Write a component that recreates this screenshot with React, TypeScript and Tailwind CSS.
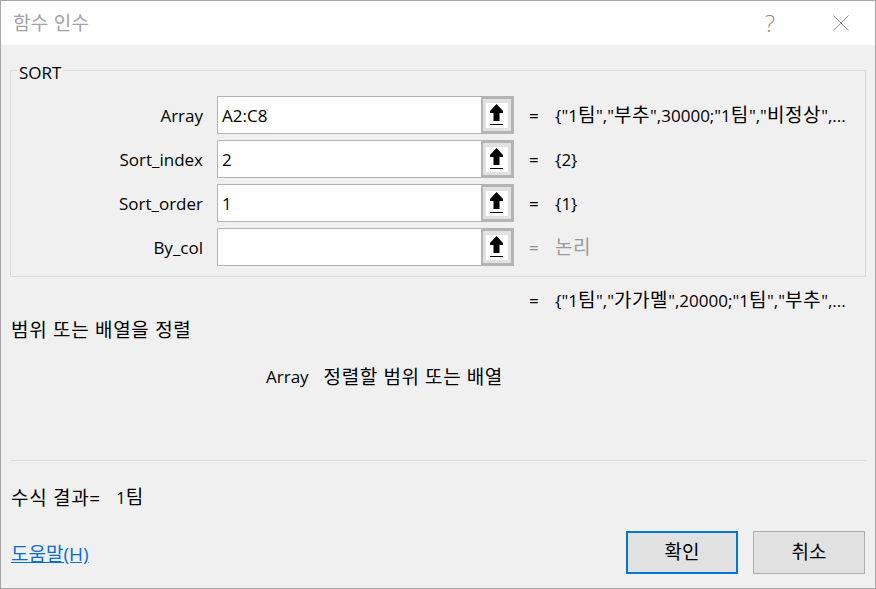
import React from 'react';

const FONT = "font-['Open_Sans','Noto_Sans_CJK_KR',sans-serif]";

const rows = [
  { label: 'Array', value: 'A2:C8', result: '{"1팀","부추",30000;"1팀","비정상",...', muted: false },
  { label: 'Sort_index', value: '2', result: '{2}', muted: false },
  { label: 'Sort_order', value: '1', result: '{1}', muted: false },
  { label: 'By_col', value: '', result: '논리', muted: true },
];

// hangul runs are set a bit bigger, Malgun Gothic is wider than Noto
const Ko = ({ text }: { text: string }) => (
  <>
    {text.split(/([가-힣]+(?: [가-힣]+)*)/).map((part, i) =>
      /[가-힣]/.test(part) ? (
        <span key={i} className="text-[19px] leading-[24px] tracking-[0.6px]">{part}</span>
      ) : (
        <span key={i}>{part}</span>
      ),
    )}
  </>
);

const RefIcon = () => (
  <svg width="22" height="25" viewBox="0 0 22 25" aria-hidden="true">
    <rect width="22" height="25" fill="#ffffff" />
    <path d="M10.5 1 L17 8 V10 H13.5 V18 H7.5 V10 H4 V8 Z" fill="#000000" />
    <rect x="4" y="21" width="13" height="1" fill="#000000" />
  </svg>
);

const ArgRow = ({ label, value, result, muted }: (typeof rows)[number]) => (
  <div className="flex h-[38px] items-center">
    <div className="w-[206px] pr-[14px] pt-[2px] text-right">{label}</div>
    <div className="flex h-[38px] w-[297px] border border-[#b4b4b4] bg-white">
      <div className="flex-1 pl-[4px] leading-[37px]">{value}</div>
      <div className="flex w-[32px] items-center justify-center border-2 border-[#b4b4b4] bg-[#e1e1e1]">
        <RefIcon />
      </div>
    </div>
    <div className={`ml-[15px] w-[26px] pt-[2px] ${muted ? 'text-[#8f8f8f]' : 'text-black'}`}>=</div>
    <div className={`pt-[2px] ${muted ? 'text-[#9a9a9a]' : 'text-black'}`}>
      <Ko text={result} />
    </div>
  </div>
);

export default function App() {
  return (
    <div className={`${FONT} flex h-[589px] w-[876px] flex-col overflow-hidden border border-[#a6a6a6] bg-[#f0f0f0] text-[17px] text-black`}>
      <div className="flex h-[44px] shrink-0 items-center bg-white pl-[12px] pr-[26px]">
        <span className="flex-1 text-[19px] tracking-[0.3px] text-[#a3a3a3]">함수 인수</span>
        <span className="mr-[58px] text-[24px] font-light text-[#8c8c8c]">?</span>
        <svg width="16" height="16" viewBox="0 0 16 16" aria-hidden="true">
          <path d="M0.5 0.5 L15.5 15.5 M15.5 0.5 L0.5 15.5" stroke="#8c8c8c" strokeWidth="1" fill="none" />
        </svg>
      </div>

      <div className="flex flex-1 flex-col px-[9px]">
        <fieldset className="mt-[10px] h-[222px] border border-[#d9d9d9] pt-[11px]">
          <legend className="ml-[6px] px-[2px] pt-[6px] text-[17px] leading-[24px]">SORT</legend>
          <div className="flex flex-col gap-[6px]">
            {rows.map((row) => (
              <ArgRow key={row.label} {...row} />
            ))}
          </div>
        </fieldset>

        <div className="mt-[12px] flex h-[24px] items-center pl-[519px]">
          <span className="w-[26px]">=</span>
          <span>
            <Ko text={'{"1팀","가가멜",20000;"1팀","부추",...'} />
          </span>
        </div>
        <div className="mt-[5px] h-[24px] pl-px text-[19px] leading-[24px] tracking-[0.7px]">범위 또는 배열을 정렬</div>
        <div className="mt-[23px] flex h-[24px] items-center">
          <span className="ml-[256px]">Array</span>
          <span className="ml-[15px] text-[19px] tracking-[0.6px]">정렬할 범위 또는 배열</span>
        </div>

        <div className="mt-[71px] h-px bg-[#dcdcdc]" />
        <div className="mt-[25px] flex h-[24px] items-center pl-px">
          <span className="text-[19px] tracking-[0.7px]">수식 결과=</span>
          <span className="ml-[15px]">
            <Ko text="1팀" />
          </span>
        </div>

        <div className="mt-[21px] flex items-center justify-between pl-px pr-[1px]">
          <a href="#" className="mt-[3px] text-[19px] text-[#0a6ed1] underline">도움말(H)</a>
          <div className="flex gap-[15px]">
            <button className="h-[43px] w-[112px] border-2 border-[#0078d7] bg-[#e1e1e1] text-[19px]">확인</button>
            <button className="h-[43px] w-[112px] border border-[#adadad] bg-[#e1e1e1] text-[19px]">취소</button>
          </div>
        </div>
      </div>
    </div>
  );
}
